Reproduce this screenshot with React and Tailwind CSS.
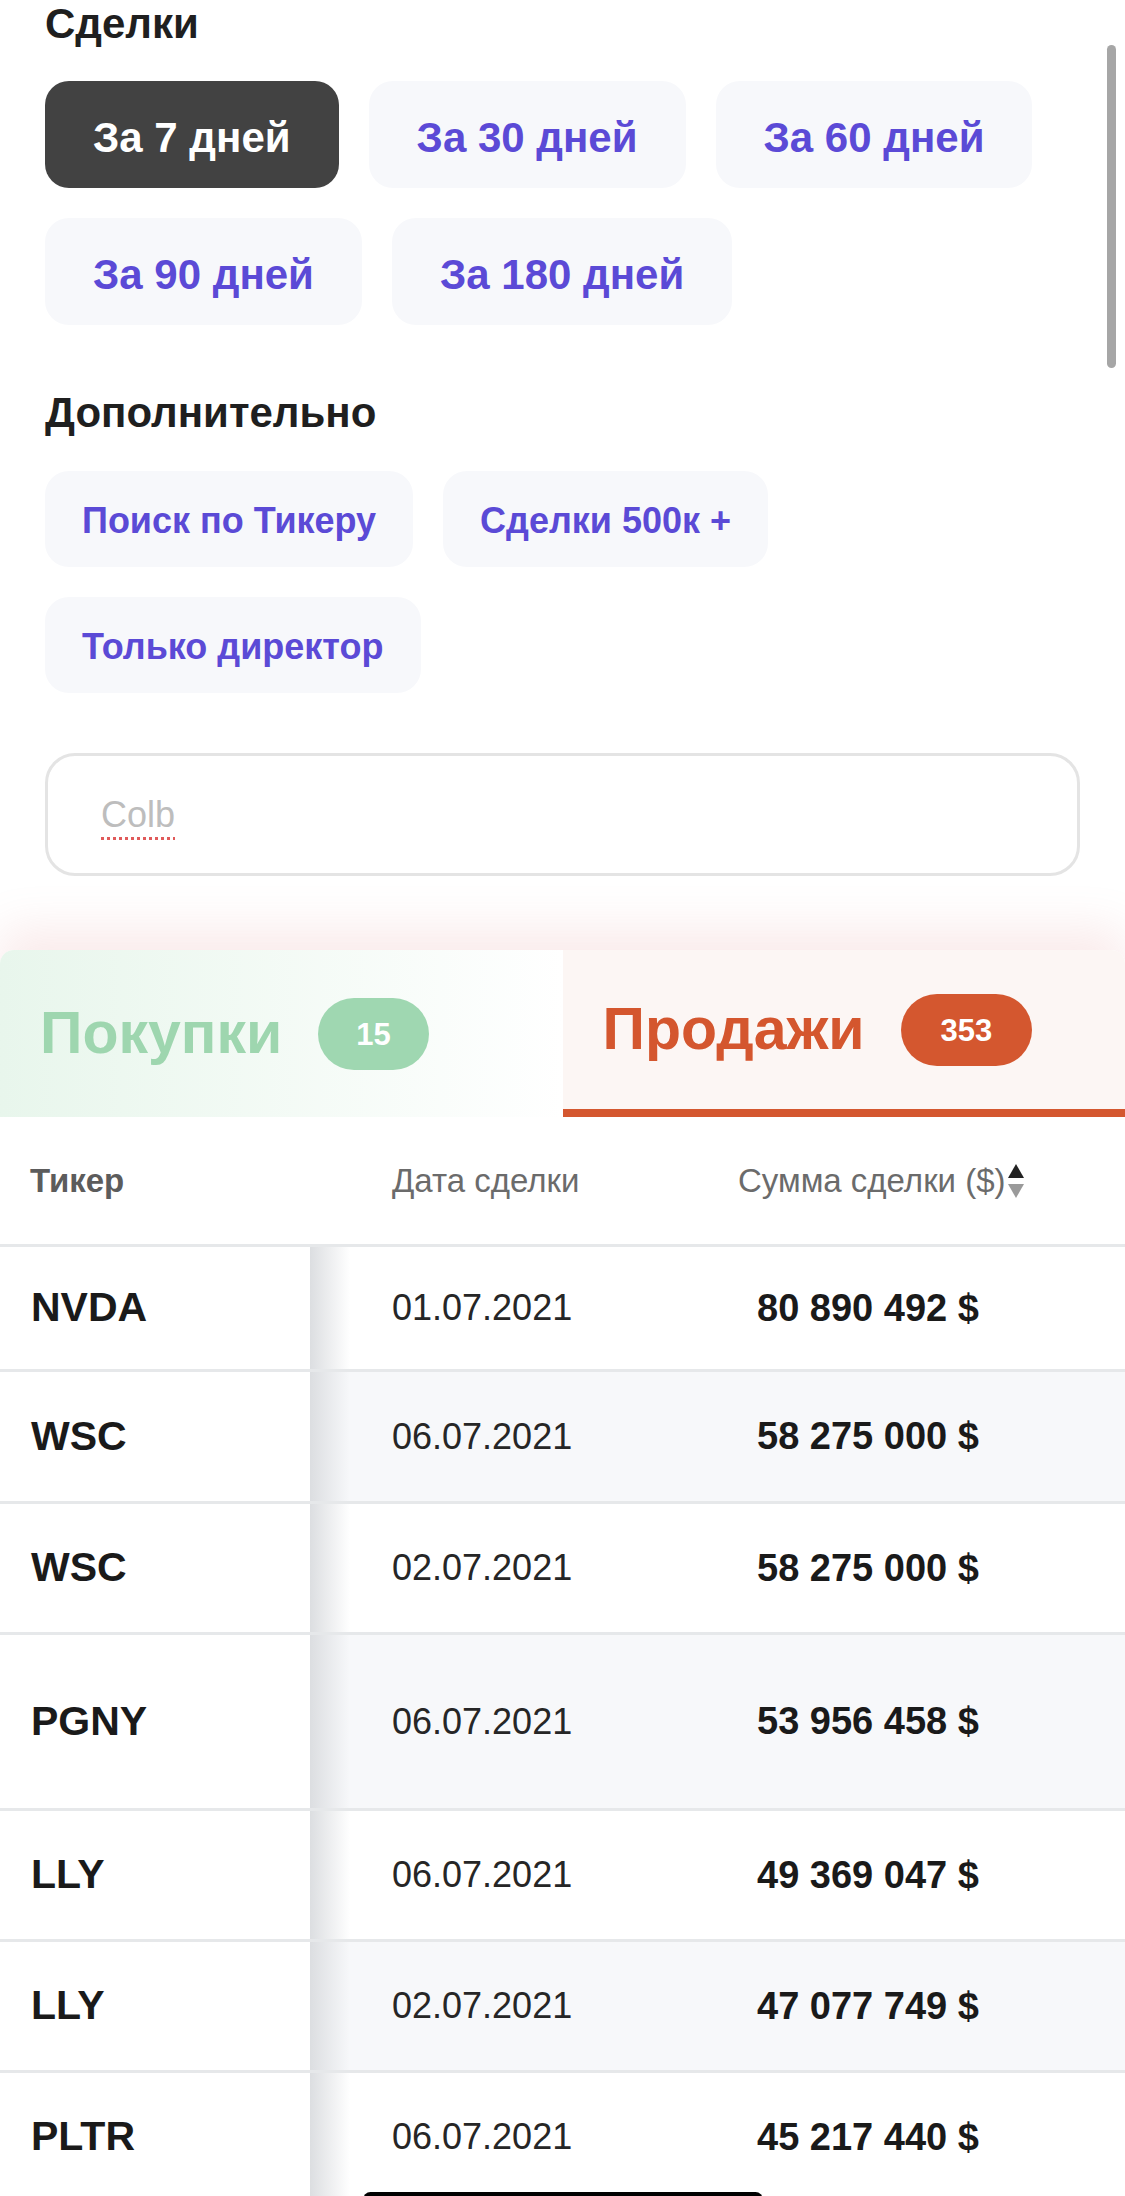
import React from 'react';

const periods = ['За 7 дней', 'За 30 дней', 'За 60 дней', 'За 90 дней', 'За 180 дней'];
const extras = ['Поиск по Тикеру', 'Сделки 500к +', 'Только директор'];

const rows = [
  { ticker: 'NVDA', date: '01.07.2021', sum: '80 890 492 $', h: 'h-[125px]' },
  { ticker: 'WSC', date: '06.07.2021', sum: '58 275 000 $', h: 'h-[132px]' },
  { ticker: 'WSC', date: '02.07.2021', sum: '58 275 000 $', h: 'h-[131px]' },
  { ticker: 'PGNY', date: '06.07.2021', sum: '53 956 458 $', h: 'h-[176px]' },
  { ticker: 'LLY', date: '06.07.2021', sum: '49 369 047 $', h: 'h-[131px]' },
  { ticker: 'LLY', date: '02.07.2021', sum: '47 077 749 $', h: 'h-[131px]' },
  { ticker: 'PLTR', date: '06.07.2021', sum: '45 217 440 $', h: 'h-[131px]' },
];

const SortIcon = () => (
  <svg width="18" height="36" viewBox="0 0 18 36" className="ml-[1px]">
    <polygon points="9,1 17,15 1,15" fill="#222222" />
    <polygon points="1,21 17,21 9,35" fill="#9a9a9a" />
  </svg>
);

export default function App() {
  return (
    <div className="relative min-h-[2196px] overflow-hidden bg-white pt-[3px] font-['Liberation_Sans',Arial,sans-serif]">
      <div className="px-[45px]">
        <h2 className="text-[42px] font-bold leading-none text-[#1f1f1f]">Сделки</h2>
        <div className="mt-[36px] flex flex-wrap gap-[30px]">
          {periods.map((p, i) => (
            <button
              key={p}
              className={`h-[107px] rounded-[24px] px-[48px] pt-[5px] text-[42px] font-bold ${
                i === 0 ? 'bg-[#424242] text-white' : 'bg-[#f7f8fb] text-[#5b4ad6]'
              }`}
            >
              {p}
            </button>
          ))}
        </div>

        <h2 className="mt-[67px] text-[42px] font-bold leading-none text-[#1f1f1f]">Дополнительно</h2>
        <div className="mt-[37px] flex flex-wrap gap-[30px]">
          {extras.map((e) => (
            <button key={e} className="h-[96px] rounded-[24px] bg-[#f7f8fb] px-[37px] pt-[3px] text-[36px] font-bold text-[#5b4ad6]">
              {e}
            </button>
          ))}
        </div>

        <div className="mt-[60px] flex h-[123px] items-center rounded-[30px] border-[3px] border-[#e4e4e4] pl-[53px]">
          <span className="text-[36px] text-[#bdbdbd] underline decoration-[#e05a5a] decoration-dotted decoration-[3px] underline-offset-[10px]">
            Colb
          </span>
        </div>
      </div>

      <div className="mt-[74px] overflow-hidden rounded-t-[14px] bg-white shadow-[0_-22px_45px_rgba(225,130,130,0.16)]">
        <div className="flex h-[167px]">
          <div className="flex w-1/2 items-center bg-linear-to-r from-[#e8f6ec] to-white pl-[40px]">
            <span className="text-[59px] font-bold text-[#9ed6af]">Покупки</span>
            <span className="ml-[36px] flex h-[72px] items-center rounded-full bg-[#9fd7b1] px-[38px] pt-[3px] text-[31px] font-bold text-white">
              15
            </span>
          </div>
          <div className="flex w-1/2 items-center border-b-[8px] border-[#d4572f] bg-[#fcf6f4] pl-[40px]">
            <span className="text-[59px] font-bold text-[#d4562e]">Продажи</span>
            <span className="ml-[36px] flex h-[72px] items-center rounded-full bg-[#d4572f] px-[40px] pt-[3px] text-[31px] font-bold text-white">
              353
            </span>
          </div>
        </div>

        <div className="flex h-[127px] items-center text-[33px]">
          <div className="w-[310px] shrink-0 pl-[30px] font-bold text-[#5c5c5c]">Тикер</div>
          <div className="w-[400px] shrink-0 pl-[82px] text-[#6b6b6b]">Дата сделки</div>
          <div className="flex items-center pl-[28px] text-[#6b6b6b]">
            Сумма сделки ($)
            <SortIcon />
          </div>
        </div>

        {rows.map((r, i) => (
          <div key={i} className={`flex border-t-[3px] border-[#e6e8ea] ${r.h}`}>
            <div className="flex w-[310px] shrink-0 items-center bg-white pl-[31px] text-[41px] font-bold text-[#1a1a1a]">
              {r.ticker}
            </div>
            <div className={`relative flex flex-1 ${i % 2 === 1 ? 'bg-[#f7f8fa]' : 'bg-white'}`}>
              <div className="absolute inset-y-0 left-0 w-[40px] bg-linear-to-r from-[#dcdee1] to-transparent" />
              <div className="flex w-[400px] shrink-0 items-center pl-[82px] text-[36px] text-[#262626]">{r.date}</div>
              <div className="flex items-center pl-[47px] text-[38px] font-bold text-[#1a1a1a]">{r.sum}</div>
            </div>
          </div>
        ))}
      </div>

      <div className="absolute left-[1107px] top-[45px] h-[323px] w-[9px] rounded-full bg-[#a6a6a6]" />
      <div className="absolute left-[363px] top-[2192px] h-[15px] w-[400px] rounded-full bg-black" />
    </div>
  );
}
